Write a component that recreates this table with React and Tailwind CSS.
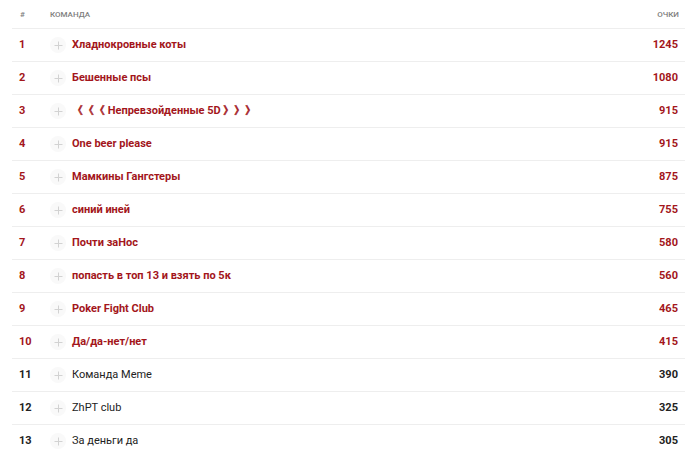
import React from "react";

const rows = [
  { n: 1, name: "Хладнокровные коты", pts: 1245, top: true },
  { n: 2, name: "Бешенные псы", pts: 1080, top: true },
  { n: 3, name: "《《《 Непревзойденные 5D 》》》", pts: 915, top: true },
  { n: 4, name: "One beer please", pts: 915, top: true },
  { n: 5, name: "Мамкины Гангстеры", pts: 875, top: true },
  { n: 6, name: "синий иней", pts: 755, top: true },
  { n: 7, name: "Почти заНос", pts: 580, top: true },
  { n: 8, name: "попасть в топ 13 и взять по 5к", pts: 560, top: true },
  { n: 9, name: "Poker Fight Club", pts: 465, top: true },
  { n: 10, name: "Да/да-нет/нет", pts: 415, top: true },
  { n: 11, name: "Команда Meme", pts: 390 },
  { n: 12, name: "ZhPT club", pts: 325 },
  { n: 13, name: "За деньги да", pts: 305 },
];

const PlusBadge = () => (
  <span className="flex h-[16px] w-[16px] items-center justify-center rounded-full bg-[#f9f9f9]">
    <svg width="9" height="9" viewBox="0 0 9 9" fill="none">
      <path d="M4.5 0.5v8M0.5 4.5h8" stroke="#d2d2d2" strokeWidth="1" />
    </svg>
  </span>
);

export default function App() {
  return (
    <div className="min-h-[454px] bg-white pl-[12px] pr-[15px] font-['Roboto','DejaVu_Sans',sans-serif]">
      <div className="flex h-[29px] items-center border-b border-[#eeeeee] pt-[1px] text-[8px] font-medium uppercase text-[#808080]">
        <span className="w-[38px] pl-[8px]">#</span>
        <span className="flex-1">Команда</span>
        <span className="pr-[6px]">Очки</span>
      </div>
      {rows.map((r) => (
        <div
          key={r.n}
          className={`flex h-[33px] items-center border-b border-[#eeeeee] text-[11px] ${
            r.top ? "text-[#a3161b]" : "text-[#222222]"
          }`}
        >
          <span className="w-[38px] pl-[7px] font-bold">{r.n}</span>
          <PlusBadge />
          <span className={`ml-[6px] flex-1 ${r.top ? "font-bold" : "font-normal"}`}>{r.name}</span>
          <span className="pr-[7px] font-bold">{r.pts}</span>
        </div>
      ))}
    </div>
  );
}
